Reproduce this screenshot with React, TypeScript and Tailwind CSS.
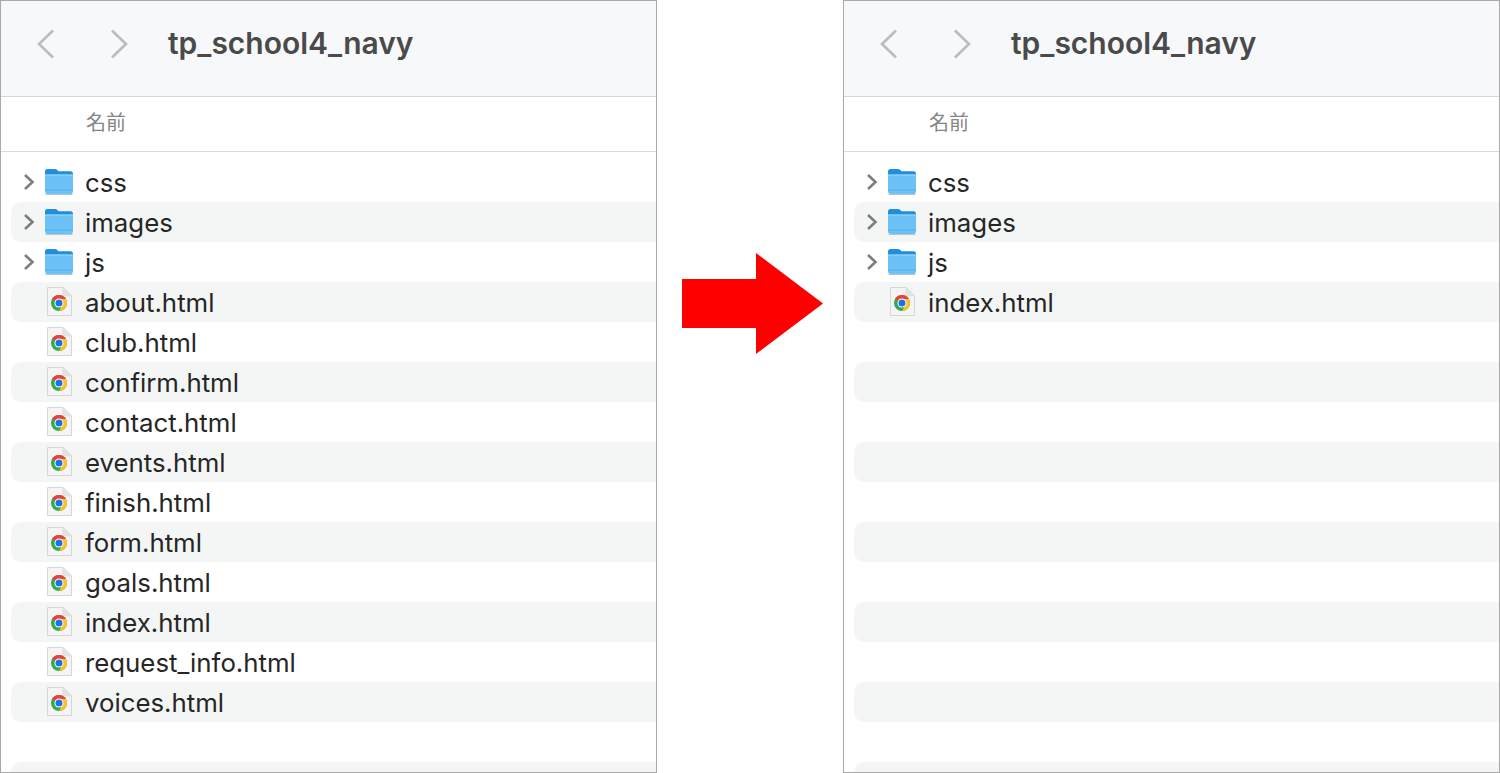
const FILES = [
  "about.html",
  "club.html",
  "confirm.html",
  "contact.html",
  "events.html",
  "finish.html",
  "form.html",
  "goals.html",
  "index.html",
  "request_info.html",
  "voices.html",
];

const FOLDERS = ["css", "images", "js"];

function FolderIcon() {
  return (
    <svg width="30" height="28" viewBox="0 0 30 28" className="mb-[2px] shrink-0">
      <path d="M1 4.500C1 3 2 2 3.500 2h7.500c1 0 1.600.4 2.300 1l1.200 1.200H26.500C28 4.200 29 5.200 29 6.700V12H1z" fill="#1f8fdc" />
      <path d="M1 7.500h28v17.300c0 1.200-1 2.200-2.200 2.200H3.200C2 27 1 26 1 24.800z" fill="#6cc2f7" />
      <rect x="1" y="7.500" width="28" height="1" fill="#9bd8fb" />
      <rect x="1" y="22.500" width="28" height="1" fill="#58b0ea" />
      <rect x="1.500" y="27" width="27" height="1" fill="#b9c4cc" />
    </svg>
  );
}

function ChromeFileIcon() {
  return (
    <svg width="28" height="30" viewBox="0 0 28 30" className="shrink-0">
      <path d="M2.500 .5H18L26.500 9V28.500H2.500z" fill="#f4f4f4" stroke="#d6d6d6" />
      <path d="M18 .5V9H26.500z" fill="#e4e4e4" stroke="#d6d6d6" strokeWidth="0.500" />
      <circle cx="14" cy="16" r="8" fill="#34a853" />
      <path d="M14 8a8 8 0 0 1 6.930 4H14a4 4 0 0 0-3.460 2L7.070 12A8 8 0 0 1 14 8z" fill="#ea4335" />
      <path d="M20.930 12H14a4 4 0 0 1 3.460 6L14 24a8 8 0 0 0 6.930-12z" fill="#fbc02d" />
      <circle cx="14" cy="16" r="4.500" fill="#fff" />
      <circle cx="14" cy="16" r="3.500" fill="#1a73e8" />
    </svg>
  );
}

function Row({ index, name, folder }: { index: number; name?: string; folder?: boolean }) {
  return (
    <div
      className={`flex h-10 shrink-0 items-center rounded-l-[10px] ${
        index % 2 === 1 ? "bg-[#f4f5f5]" : "bg-white"
      }`}
    >
      <div className="flex w-[33px] shrink-0 justify-end pr-[9px]">
        {folder && (
          <svg width="12" height="20" viewBox="0 0 12 20" fill="none">
            <path d="M2 3L9.500 10L2 17" stroke="#7d7d7d" strokeWidth="2.600" />
          </svg>
        )}
      </div>
      <div className="flex w-[41px] shrink-0 justify-start">
        {name && (folder ? <FolderIcon /> : <div className="pl-[1px]"><ChromeFileIcon /></div>)}
      </div>
      {name && <span className="pt-[2px] text-[25.800px] leading-none text-[#262626]">{name}</span>}
    </div>
  );
}

function FinderWindow({ folders, files, width }: { folders: string[]; files: string[]; width: string }) {
  const rows = [
    ...folders.map((name) => ({ name, folder: true })),
    ...files.map((name) => ({ name, folder: false })),
  ];
  const blanks = 16 - rows.length;

  return (
    <div className={`flex h-[773px] shrink-0 flex-col overflow-hidden border border-[#a9a9a9] bg-white ${width}`}>
      <div className="flex h-[96px] shrink-0 items-center border-b border-[#d6d6d6] bg-[#f7f8fa] pb-[10px]">
        <svg width="22" height="32" viewBox="0 0 22 32" fill="none" className="ml-[34px]">
          <path d="M18 2.500L4 16L18 29.500" stroke="#bcbcbc" strokeWidth="2.600" />
        </svg>
        <svg width="22" height="32" viewBox="0 0 22 32" fill="none" className="ml-[51px]">
          <path d="M4 2.500L18 16L4 29.500" stroke="#bcbcbc" strokeWidth="2.600" />
        </svg>
        <h1 className="ml-[38px] text-[30px] font-semibold text-[#4a4a4a]">tp_school4_navy</h1>
      </div>
      <div className="flex h-[55px] shrink-0 items-center border-b border-[#dcdcdc] pl-[85px] pb-[5px] font-['Noto_Sans_CJK_JP',sans-serif] text-[20px] text-[#868686]">
        名前
      </div>
      <div className="flex flex-col pl-[10px] pt-[10px]">
        {rows.map((row, i) => (
          <Row key={row.name} index={i} name={row.name} folder={row.folder} />
        ))}
        {Array.from({ length: blanks }).map((_, i) => (
          <Row key={i} index={rows.length + i} />
        ))}
      </div>
    </div>
  );
}

export default function App() {
  return (
    <div className="flex h-[773px] w-[1500px] overflow-hidden bg-white font-['Inter',sans-serif]">
      <FinderWindow folders={FOLDERS} files={FILES} width="w-[657px]" />
      <div className="flex w-[186px] shrink-0 items-center pl-[25px] pb-[167px]">
        <svg width="141" height="101" viewBox="0 0 141 101">
          <polygon points="0,26 74,26 74,0 141,50.500 74,101 74,75 0,75" fill="#ff0000" />
        </svg>
      </div>
      <FinderWindow folders={FOLDERS} files={["index.html"]} width="w-[657px]" />
    </div>
  );
}
